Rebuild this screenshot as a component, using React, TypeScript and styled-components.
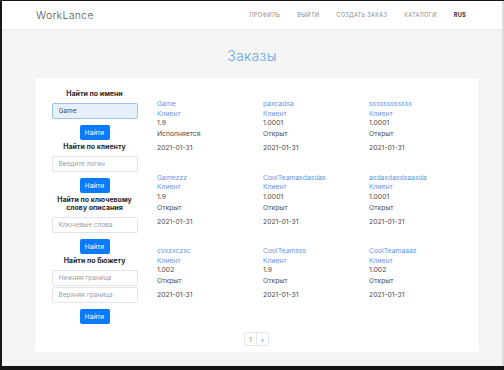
import * as React from 'react';
import styled, { createGlobalStyle } from 'styled-components';

interface IOrder {
	name: string;
	price: string;
	status: string;
	date: string;
}

const orders: IOrder[] = [
	{ name: 'Game', price: '1.9', status: 'Исполняется', date: '2021-01-31' },
	{ name: 'paxcadsa', price: '1.0001', status: 'Открыт', date: '2021-01-31' },
	{ name: 'ssssssssssss', price: '1.0001', status: 'Открыт', date: '2021-01-31' },
	{ name: 'Gamezzz', price: '1.9', status: 'Открыт', date: '2021-01-31' },
	{ name: 'CoolTeamasdasdas', price: '1.0001', status: 'Открыт', date: '2021-01-31' },
	{ name: 'asdasdasdsaasda', price: '1.0001', status: 'Открыт', date: '2021-01-31' },
	{ name: 'cvxzxczxc', price: '1.002', status: 'Открыт', date: '2021-01-31' },
	{ name: 'CoolTeamsss', price: '1.9', status: 'Открыт', date: '2021-01-31' },
	{ name: 'CoolTeamaaaz', price: '1.002', status: 'Открыт', date: '2021-01-31' },
];

const navLinks = ['Профиль', 'Выйти', 'Создать заказ', 'Каталоги'];

export default function App() {
	const [name, setName] = React.useState('Game');

	return (
		<>
			<GlobalStyle />
			<Frame>
				<NavBar>
					<NavInner>
						<Brand>WorkLance</Brand>
						<NavList>
							{navLinks.map(link => <NavLink key={link}>{link}</NavLink>)}
							<NavLink bold>RUS</NavLink>
						</NavList>
					</NavInner>
				</NavBar>

				<Title>Заказы</Title>

				<Card>
					<Top>
						<Sidebar>
							<Label>Найти по имени</Label>
							<Input focused value={name} onChange={e => setName(e.target.value)} />
							<Button>Найти</Button>

							<Label>Найти по клиенту</Label>
							<Input placeholder="Введите логин" />
							<Button>Найти</Button>

							<Label>Найти по ключевому слову описания</Label>
							<Input placeholder="Ключевые слова" />
							<Button>Найти</Button>

							<Label>Найти по бюжету</Label>
							<Input stacked placeholder="Нижняя граница" />
							<Input placeholder="Верхняя граница" />
							<Button>Найти</Button>
						</Sidebar>

						<Grid>
							{orders.map(order => (
								<Order key={order.name}>
									<OrderLink>{order.name}</OrderLink>
									<OrderLink>Клиент</OrderLink>
									<OrderText>{order.price}</OrderText>
									<OrderStatus>{order.status}</OrderStatus>
									<OrderDate>{order.date}</OrderDate>
								</Order>
							))}
						</Grid>
					</Top>

					<Pagination>
						<PageItem>1</PageItem>
						<PageItem active>»</PageItem>
					</Pagination>
				</Card>
			</Frame>
		</>
	);
}

// STYLE
const GlobalStyle = createGlobalStyle`
	html, body {
		margin: 0;
		padding: 0;
		background: #161616;
	}
	body {
		font-family: Inter, "Noto Sans", sans-serif;
	}
	* {
		box-sizing: border-box;
	}
`;

const Frame = styled.div`
	margin: 1px 0 0 2px;
	height: 365px;
	background: #f5f5f5;
	border-right: 2px solid #dcdcdc;
	overflow: hidden;
`;

const NavBar = styled.nav`
	height: 28px;
	background: #fff;
	box-shadow: 0 1px 3px rgba(0, 0, 0, 0.06);
`;

const NavInner = styled.div`
	display: flex;
	align-items: center;
	justify-content: space-between;
	height: 100%;
	padding: 0 36px 0 34px;
`;

const Brand = styled.div`
	font-size: 10.5px;
	font-weight: 300;
	color: #555;
	letter-spacing: 0.3px;
`;

const NavList = styled.div`
	display: flex;
	align-items: center;
	gap: 17px;
`;

const NavLink = styled.span<{ bold?: boolean }>`
	font-size: 5.6px;
	text-transform: uppercase;
	letter-spacing: 0.3px;
	color: ${props => (props.bold ? '#333' : '#8a8a8a')};
	font-weight: ${props => (props.bold ? 700 : 400)};
`;

const Title = styled.h1`
	margin: 17px 0 13px;
	text-align: center;
	font-size: 14px;
	line-height: 19px;
	font-weight: 300;
	color: #62a3e6;
	letter-spacing: 0.3px;
`;

const Card = styled.div`
	margin: 0 23px 0 33px;
	background: #fff;
	box-shadow: 0 0 2px rgba(0, 0, 0, 0.05);
	padding-bottom: 6px;
`;

const Top = styled.div`
	display: flex;
	align-items: flex-start;
`;

const Sidebar = styled.div`
	display: flex;
	flex-direction: column;
	align-items: center;
	width: 120px;
	padding: 12px 17px 0 16px;
`;

const Label = styled.div`
	font-size: 7px;
	line-height: 8px;
	font-weight: 700;
	color: #2a2a2a;
	text-align: center;
	margin-bottom: 5px;
`;

const Input = styled.input<{ focused?: boolean; stacked?: boolean }>`
	width: 86px;
	height: 16px;
	margin: 0 0 ${props => (props.stacked ? '1px' : '6px')};
	padding: 0 6px;
	font-family: inherit;
	font-size: 6.5px;
	color: #444;
	border-radius: 2px;
	outline: none;
	border: 1px solid ${props => (props.focused ? '#9cc3f5' : '#e1e4e8')};
	background: ${props => (props.focused ? '#e8f0fe' : '#fff')};

	&::placeholder {
		color: #999ea4;
	}
`;

const Button = styled.button`
	width: 30px;
	height: 15px;
	margin-bottom: 3px;
	padding: 0;
	border: none;
	border-radius: 2px;
	background: #0a7bff;
	color: #fff;
	font-family: inherit;
	font-size: 6.5px;
`;

const Grid = styled.div`
	display: grid;
	grid-template-columns: repeat(3, 106px);
	row-gap: 20px;
	padding: 21px 0 0 2px;
`;

const Order = styled.div`
	display: flex;
	flex-direction: column;
	font-size: 6.8px;
	line-height: 9.5px;
`;

const OrderLink = styled.span`
	color: #6197ec;
`;

const OrderText = styled.span`
	color: #4a4a4a;
`;

const OrderStatus = styled(OrderText)`
	margin-top: 1.75px;
`;

const OrderDate = styled(OrderText)`
	margin-top: 4.25px;
`;

const Pagination = styled.div`
	display: flex;
	justify-content: center;
	margin-top: 5px;
`;

const PageItem = styled.span<{ active?: boolean }>`
	display: flex;
	align-items: center;
	justify-content: center;
	width: 13px;
	height: 14px;
	font-size: 6px;
	color: ${props => (props.active ? '#6197ec' : '#777')};
	border: 1px solid #e3e6ea;
	margin-left: -1px;

	&:first-child {
		border-radius: 2px 0 0 2px;
	}
	&:last-child {
		border-radius: 0 2px 2px 0;
	}
`;
